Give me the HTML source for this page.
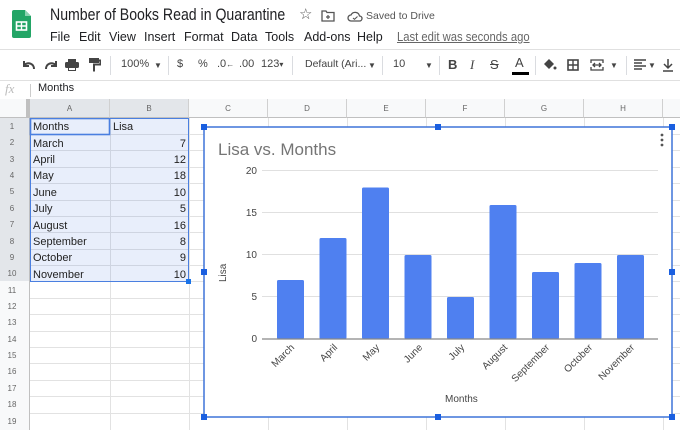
<!DOCTYPE html>
<html><head><meta charset="utf-8"><style>
*{margin:0;padding:0;box-sizing:border-box}
body{width:680px;height:430px;overflow:hidden;background:#fff;font-family:"Liberation Sans",Arial,sans-serif;position:relative;color:#202124}
.a{position:absolute;white-space:nowrap}
.tb{font-size:11px;color:#444}
.m{position:absolute;top:30px;font-size:12.5px;color:#202124}
.sep{position:absolute;top:56px;width:1px;height:19px;background:#dadce0}
.ch{position:absolute;top:99px;height:19px;border-right:1px solid #d0d0d0;font-size:8px;color:#666;text-align:center;line-height:19px;background:#f8f9fa;border-bottom:1px solid #c0c0c0}
</style></head><body>
<svg class="a" style="left:12px;top:10px" width="19" height="28" viewBox="0 0 19 28"><path d="M0 2a2 2 0 0 1 2-2h11l6 6v20a2 2 0 0 1-2 2H2a2 2 0 0 1-2-2z" fill="#23a566"/><path d="M13 0v6h6z" fill="#8ed1b1"/><rect x="4.5" y="12" width="10" height="8" fill="none" stroke="#fff" stroke-width="1.6"/><path d="M4.5 16h10M9.5 12v8" stroke="#fff" stroke-width="1.4"/></svg>
<div class="a" style="left:50px;top:6px;font-size:16.5px;color:#202124;transform:scaleX(0.855);transform-origin:0 0">Number of Books Read in Quarantine</div>
<div class="a" style="left:299px;top:5px;font-size:15px;color:#555">☆</div>
<svg class="a" style="left:321px;top:10px" width="14" height="12" viewBox="0 0 14 12"><path d="M1 1h4l1 1.5h7V11H1z" fill="none" stroke="#555" stroke-width="1.3"/><path d="M7 5v4M5 7h4" stroke="#555" stroke-width="1.2"/></svg>
<svg class="a" style="left:347px;top:10px" width="16" height="12" viewBox="0 0 16 12"><path d="M4 11a3 3 0 0 1 0-6 4.5 4.5 0 0 1 8.5 1 2.5 2.5 0 0 1 0 5z" fill="none" stroke="#555" stroke-width="1.3"/><path d="M6 8l1.5 1.3L10.5 6.5" fill="none" stroke="#555" stroke-width="1.1"/></svg>
<div class="a" style="left:366px;top:10px;font-size:10.5px;color:#555">Saved to Drive</div>
<div class="m" style="left:50px">File</div>
<div class="m" style="left:79px">Edit</div>
<div class="m" style="left:109px">View</div>
<div class="m" style="left:144px">Insert</div>
<div class="m" style="left:184px">Format</div>
<div class="m" style="left:231px">Data</div>
<div class="m" style="left:265px">Tools</div>
<div class="m" style="left:304px">Add-ons</div>
<div class="m" style="left:357px">Help</div>
<div class="a" style="left:397px;top:30px;font-size:12.5px;color:#666;text-decoration:underline;transform:scaleX(0.9);transform-origin:0 0">Last edit was seconds ago</div>
<div class="a" style="left:0;top:49px;width:680px;height:1px;background:#e0e0e0"></div>
<div class="a" style="left:0;top:80px;width:680px;height:1px;background:#e0e0e0"></div>
<svg class="a" style="left:21px;top:59px" width="16" height="12" viewBox="0 0 16 12"><path d="M13 10a5.5 5.5 0 0 0-9.5-4M3 2v5h5" fill="none" stroke="#444" stroke-width="2"/></svg>
<svg class="a" style="left:43px;top:59px" width="16" height="12" viewBox="0 0 16 12"><path d="M3 10a5.5 5.5 0 0 1 9.5-4M13 2v5H8" fill="none" stroke="#444" stroke-width="2"/></svg>
<svg class="a" style="left:65px;top:58px" width="14" height="14" viewBox="0 0 14 14"><rect x="0" y="4" width="14" height="6" rx="1.5" fill="#444"/><rect x="3" y="1" width="8" height="3" fill="#444"/><rect x="3" y="9" width="8" height="4" fill="#444"/><rect x="4" y="10" width="6" height="2" fill="#fff"/></svg>
<svg class="a" style="left:89px;top:58px" width="12" height="14" viewBox="0 0 12 14"><rect x="0" y="0" width="10" height="5" fill="#444"/><path d="M10 2.5h1.5v4H5v7" fill="none" stroke="#444" stroke-width="2"/></svg>
<div class="sep" style="left:110px"></div>
<div class="a tb" style="left:121px;top:58px">100%</div><div class="a tb" style="left:154px;top:61px;font-size:8px">▼</div>
<div class="sep" style="left:168px"></div>
<div class="a tb" style="left:177px;top:58px">$</div>
<div class="a tb" style="left:198px;top:58px">%</div>
<div class="a tb" style="left:217px;top:58px">.0<span style="font-size:8px">←</span></div>
<div class="a tb" style="left:239px;top:58px">.00</div>
<div class="a tb" style="left:261px;top:58px">123<span style="font-size:8px">▾</span></div>
<div class="sep" style="left:292px"></div>
<div class="a tb" style="left:305px;top:58px;font-size:10.5px">Default (Ari...</div><div class="a tb" style="left:368px;top:61px;font-size:8px">▼</div>
<div class="sep" style="left:382px"></div>
<div class="a tb" style="left:393px;top:58px">10</div><div class="a tb" style="left:425px;top:61px;font-size:8px">▼</div>
<div class="sep" style="left:439px"></div>
<div class="a" style="left:448px;top:57px;font-size:13px;font-weight:bold;color:#444">B</div>
<div class="a" style="left:470px;top:57px;font-size:13px;font-style:italic;font-family:'Liberation Serif',serif;color:#444">I</div>
<div class="a" style="left:490px;top:57px;font-size:13px;text-decoration:line-through;color:#444">S</div>
<div class="a" style="left:515px;top:55px;font-size:13px;color:#444">A</div>
<div class="a" style="left:512px;top:72px;width:17px;height:3px;background:#000"></div>
<div class="sep" style="left:535px"></div>
<svg class="a" style="left:542px;top:58px" width="15" height="14" viewBox="0 0 15 14"><path d="M2 6l5-5 5 5-5 5z" fill="#444"/><circle cx="13" cy="10" r="1.5" fill="#444"/></svg>
<svg class="a" style="left:567px;top:59px" width="12" height="12" viewBox="0 0 12 12"><rect x="1" y="1" width="10" height="10" fill="none" stroke="#444" stroke-width="1.6"/><path d="M6 1v10M1 6h10" stroke="#444" stroke-width="1.4"/></svg>
<svg class="a" style="left:590px;top:59px" width="14" height="12" viewBox="0 0 14 12"><path d="M1 4V1h12v3M1 8v3h12V8M3 6h8M5 4l-2 2 2 2M9 4l2 2-2 2" fill="none" stroke="#444" stroke-width="1.3"/></svg>
<div class="a tb" style="left:610px;top:61px;font-size:8px">▼</div>
<div class="sep" style="left:626px"></div>
<svg class="a" style="left:634px;top:59px" width="12" height="11" viewBox="0 0 12 11"><path d="M0 1h12M0 4h8M0 7h12M0 10h8" stroke="#444" stroke-width="1.4"/></svg>
<div class="a tb" style="left:648px;top:61px;font-size:8px">▼</div>
<svg class="a" style="left:662px;top:58px" width="12" height="14" viewBox="0 0 12 14"><path d="M6 1v9M2 6l4 4 4-4M1 13h10" fill="none" stroke="#444" stroke-width="1.5"/></svg>
<div class="a" style="left:5px;top:81px;font-size:13px;font-style:italic;color:#bbb;font-family:'Liberation Serif',serif">fx</div>
<div class="a" style="left:30px;top:84px;width:1px;height:13px;background:#ccc"></div>
<div class="a" style="left:38px;top:82px;font-size:11px">Months</div>
<div class="a" style="left:0;top:99px;width:30px;height:19px;background:#f8f9fa;border-right:4px solid #c0c0c0;border-bottom:1px solid #c0c0c0"></div>
<div class="ch" style="left:30px;width:80px;background:#e3e6ea">A</div>
<div class="ch" style="left:110px;width:79px;background:#e3e6ea">B</div>
<div class="ch" style="left:189px;width:79px">C</div>
<div class="ch" style="left:268px;width:79px">D</div>
<div class="ch" style="left:347px;width:79px">E</div>
<div class="ch" style="left:426px;width:79px">F</div>
<div class="ch" style="left:505px;width:79px">G</div>
<div class="ch" style="left:584px;width:79px">H</div>
<div class="ch" style="left:663px;width:20px"></div>
<svg class="a" style="left:0;top:118px" width="680" height="312">
<g stroke="#e2e2e2" stroke-width="1">
<line x1="30" y1="16.5" x2="680" y2="16.5"/><line x1="30" y1="32.5" x2="680" y2="32.5"/><line x1="30" y1="49.5" x2="680" y2="49.5"/><line x1="30" y1="65.5" x2="680" y2="65.5"/><line x1="30" y1="82.5" x2="680" y2="82.5"/><line x1="30" y1="98.5" x2="680" y2="98.5"/><line x1="30" y1="114.5" x2="680" y2="114.5"/><line x1="30" y1="131.5" x2="680" y2="131.5"/><line x1="30" y1="147.5" x2="680" y2="147.5"/><line x1="30" y1="163.5" x2="680" y2="163.5"/><line x1="30" y1="180.5" x2="680" y2="180.5"/><line x1="30" y1="196.5" x2="680" y2="196.5"/><line x1="30" y1="213.5" x2="680" y2="213.5"/><line x1="30" y1="229.5" x2="680" y2="229.5"/><line x1="30" y1="245.5" x2="680" y2="245.5"/><line x1="30" y1="262.5" x2="680" y2="262.5"/><line x1="30" y1="278.5" x2="680" y2="278.5"/><line x1="30" y1="295.5" x2="680" y2="295.5"/>
<line x1="110.5" y1="0" x2="110.5" y2="312"/><line x1="189.5" y1="0" x2="189.5" y2="312"/><line x1="268.5" y1="0" x2="268.5" y2="312"/><line x1="347.5" y1="0" x2="347.5" y2="312"/><line x1="426.5" y1="0" x2="426.5" y2="312"/><line x1="505.5" y1="0" x2="505.5" y2="312"/><line x1="584.5" y1="0" x2="584.5" y2="312"/><line x1="663.5" y1="0" x2="663.5" y2="312"/>
</g>
<rect x="0" y="0" width="30" height="312" fill="#f8f9fa"/>
<rect x="0" y="0" width="30" height="163" fill="#e3e6ea"/>
<line x1="29.5" y1="0" x2="29.5" y2="312" stroke="#c0c0c0"/>
<g font-size="8" fill="#666" text-anchor="middle" font-family="Liberation Sans">
<text x="12" y="11">1</text><text x="12" y="27">2</text><text x="12" y="44">3</text><text x="12" y="60">4</text><text x="12" y="76">5</text><text x="12" y="93">6</text><text x="12" y="109">7</text><text x="12" y="126">8</text><text x="12" y="142">9</text><text x="12" y="158">10</text><text x="12" y="175">11</text><text x="12" y="191">12</text><text x="12" y="207">13</text><text x="12" y="224">14</text><text x="12" y="240">15</text><text x="12" y="256">16</text><text x="12" y="273">17</text><text x="12" y="289">18</text><text x="12" y="306">19</text>
</g>
<rect x="30.5" y="0.5" width="158" height="163" fill="rgba(66,113,220,0.12)" stroke="#4a7fe0" stroke-width="1"/>
<rect x="30.5" y="0.5" width="79" height="16" fill="none" stroke="#4a7fe0" stroke-width="1.6"/>
<rect x="186" y="161" width="5" height="5" fill="#1a73e8"/>
<g font-size="11" fill="#222" font-family="Liberation Sans">
<text x="33" y="12">Months</text><text x="113" y="12">Lisa</text>
<text x="33" y="29">March</text><text x="33" y="45">April</text><text x="33" y="61">May</text><text x="33" y="78">June</text><text x="33" y="94">July</text><text x="33" y="111">August</text><text x="33" y="127">September</text><text x="33" y="143">October</text><text x="33" y="160">November</text>
<g text-anchor="end"><text x="186" y="29">7</text><text x="186" y="45">12</text><text x="186" y="61">18</text><text x="186" y="78">10</text><text x="186" y="94">5</text><text x="186" y="111">16</text><text x="186" y="127">8</text><text x="186" y="143">9</text><text x="186" y="160">10</text></g>
</g>
</svg>
<svg class="a" style="left:0;top:0" width="680" height="430">
<rect x="204" y="127" width="468" height="290" fill="#fff" stroke="#3e74d8" stroke-width="1.5"/>
<g fill="#1a5fe0"><rect x="201" y="124" width="6" height="6"/><rect x="435" y="124" width="6" height="6"/><rect x="669" y="124" width="6" height="6"/><rect x="201" y="269" width="6" height="6"/><rect x="669" y="269" width="6" height="6"/><rect x="201" y="414" width="6" height="6"/><rect x="435" y="414" width="6" height="6"/><rect x="669" y="414" width="6" height="6"/></g>
<text x="218" y="155" font-size="17" fill="#757575" font-family="Liberation Sans">Lisa vs. Months</text>
<g fill="#555"><circle cx="662" cy="135" r="1.4"/><circle cx="662" cy="140" r="1.4"/><circle cx="662" cy="145" r="1.4"/></g>
<g stroke="#e0e0e0" stroke-width="1"><line x1="262" y1="170.5" x2="658" y2="170.5"/><line x1="262" y1="212.5" x2="658" y2="212.5"/><line x1="262" y1="254.5" x2="658" y2="254.5"/><line x1="262" y1="296.5" x2="658" y2="296.5"/></g>
<g font-size="10" fill="#444" text-anchor="end" font-family="Liberation Sans"><text x="257" y="174">20</text><text x="257" y="216">15</text><text x="257" y="258">10</text><text x="257" y="300">5</text><text x="257" y="342">0</text></g>
<g fill="#4f80f0">
<rect x="277" y="280" width="27" height="59" rx="1.5"/>
<rect x="319.5" y="238" width="27" height="101" rx="1.5"/>
<rect x="362" y="187.5" width="27" height="151.5" rx="1.5"/>
<rect x="404.5" y="255" width="27" height="84" rx="1.5"/>
<rect x="447" y="297" width="27" height="42" rx="1.5"/>
<rect x="489.5" y="205" width="27" height="134" rx="1.5"/>
<rect x="532" y="272" width="27" height="67" rx="1.5"/>
<rect x="574.5" y="263" width="27" height="76" rx="1.5"/>
<rect x="617" y="255" width="27" height="84" rx="1.5"/>
</g>
<line x1="262" y1="339" x2="658" y2="339" stroke="#888" stroke-width="1.2"/>
<g font-size="10" fill="#444" text-anchor="end" font-family="Liberation Sans">
<text transform="translate(295,348) rotate(-45)">March</text>
<text transform="translate(338,348) rotate(-45)">April</text>
<text transform="translate(380,348) rotate(-45)">May</text>
<text transform="translate(423,348) rotate(-45)">June</text>
<text transform="translate(465,348) rotate(-45)">July</text>
<text transform="translate(508,348) rotate(-45)">August</text>
<text transform="translate(550,348) rotate(-45)">September</text>
<text transform="translate(593,348) rotate(-45)">October</text>
<text transform="translate(635,348) rotate(-45)">November</text>
</g>
<text x="445" y="402" font-size="10" fill="#444" font-family="Liberation Sans">Months</text>
<text transform="translate(226,282) rotate(-90)" font-size="10" fill="#444" font-family="Liberation Sans">Lisa</text>
</svg>
</body></html>
